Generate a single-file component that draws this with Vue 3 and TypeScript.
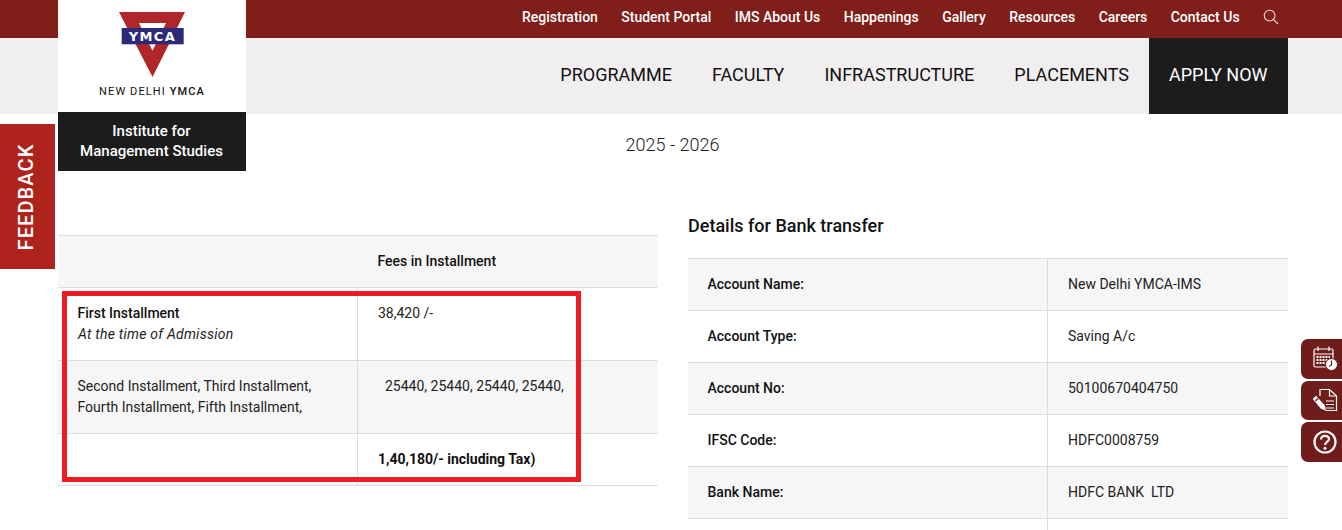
<script setup lang="ts">
const topLinks: string[] = ['Registration', 'Student Portal', 'IMS About Us', 'Happenings', 'Gallery', 'Resources', 'Careers', 'Contact Us']
const mainLinks: string[] = ['PROGRAMME', 'FACULTY', 'INFRASTRUCTURE', 'PLACEMENTS']
const bank: [string, string][] = [
  ['Account Name:', 'New Delhi YMCA-IMS'],
  ['Account Type:', 'Saving A/c'],
  ['Account No:', '50100670404750'],
  ['IFSC Code:', 'HDFC0008759'],
  ['Bank Name:', 'HDFC BANK  LTD'],
  ['', '']
]
</script>

<template>
  <div class="page">
    <header>
      <div class="top">
        <a v-for="l in topLinks" :key="l">{{ l }}</a>
        <svg class="search" width="16" height="16" viewBox="0 0 16 16" fill="none" stroke="#e9dcda" stroke-width="1.1">
          <circle cx="6.600" cy="6.600" r="5.400" />
          <path d="M10.600 10.600 15 15" />
        </svg>
      </div>
      <nav class="main">
        <a v-for="l in mainLinks" :key="l">{{ l }}</a>
        <a class="apply">APPLY NOW</a>
      </nav>
    </header>

    <div class="logo">
      <div class="logo-top">
        <svg class="mark" width="66" height="65" viewBox="0 0 66 65">
          <path d="M0 0H66L33.500 65Z" fill="#b0262a" />
          <path d="M20 11H47L33.500 38.700Z" fill="#fff" />
          <rect x="2.700" y="16" width="62" height="16.300" fill="#2c2a78" />
          <text x="33.500" y="29" text-anchor="middle" class="ymca">YMCA</text>
        </svg>
        <div class="logo-name">NEW DELHI <b>YMCA</b></div>
      </div>
      <div class="logo-bottom">Institute for<br />Management Studies</div>
    </div>

    <div class="feedback"><span>FEEDBACK</span></div>

    <div class="year">2025 - 2026</div>

    <main class="columns">
      <section class="left">
        <table class="fees">
          <tbody>
            <tr class="head">
              <td class="c1"></td>
              <td class="c2"><b>Fees in Installment</b></td>
            </tr>
            <tr class="r1">
              <td class="c1"><b>First Installment</b><br /><i>At the time of Admission</i></td>
              <td class="c2">38,420 /-</td>
            </tr>
            <tr class="r2 shade">
              <td class="c1">Second Installment, Third Installment,<br />Fourth Installment, Fifth Installment,</td>
              <td class="c2 indent">25440, 25440, 25440, 25440,</td>
            </tr>
            <tr class="r3">
              <td class="c1"></td>
              <td class="c2"><b class="total">1,40,180/- including Tax)</b></td>
            </tr>
          </tbody>
        </table>
      </section>
      <section class="right">
        <h3>Details for Bank transfer</h3>
        <table class="bank">
          <tbody>
            <tr v-for="(r, i) in bank" :key="i">
              <td class="b1"><b>{{ r[0] }}</b></td>
              <td class="b2">{{ r[1] }}</td>
            </tr>
          </tbody>
        </table>
      </section>
    </main>

    <div class="highlight"></div>

    <div class="side">
      <a class="side-btn">
        <svg width="25" height="25" viewBox="0 0 25 25" fill="none" stroke="#fff" stroke-width="1.200">
          <rect x="1" y="3" width="19" height="18" rx="1.500" />
          <path d="M1 8H20M5 .5V5M16 .5V5" />
          <path d="M3.500 11H17M3.500 14H17M3.500 17H13" stroke-width="2.200" stroke-dasharray="2 1" />
          <circle cx="18.500" cy="18.500" r="6" fill="#fff" stroke="#6f1d1a" stroke-width="1" />
          <path d="M18.500 14.500V19L16 20.500" stroke="#6f1d1a" />
        </svg>
      </a>
      <a class="side-btn">
        <svg width="25" height="25" viewBox="0 0 25 25" fill="none" stroke="#fff" stroke-width="1.200">
          <path d="M7 8V1.500H16.500L23.500 8V22.500H12" />
          <path d="M16.500 1.500V8H23.500" />
          <path d="M13 13H21M13 16.500H21M13 20H21" />
          <path d="M.5 11L3 8.500L11.500 18L12 21.500L8.500 20.500Z" fill="#fff" />
          <path d="M2.500 13 5 10.500" stroke="#6f1d1a" />
        </svg>
      </a>
      <a class="side-btn">
        <svg width="24" height="24" viewBox="0 0 24 24" fill="none" stroke="#fff" stroke-width="2.200">
          <circle cx="12" cy="12" r="10.500" />
          <path d="M8 9.500C8 6.900 10 5.800 12 5.800C14.400 5.800 16 7.100 16 9.200C16 11.900 12 12.100 12 15" />
          <circle cx="12" cy="18.200" r="1.500" fill="#fff" stroke="none" />
        </svg>
      </a>
    </div>
  </div>
</template>

<style scoped>
.page {
  position: relative;
  width: 1342px;
  height: 530px;
  overflow: hidden;
  background: #fff;
  font-family: Roboto, "Liberation Sans", sans-serif;
  color: #222;
}
.top {
  height: 38px;
  background: #801e1a;
  display: flex;
  align-items: center;
  justify-content: flex-end;
  padding-right: 63px;
  gap: 23.4px;
}
.top a {
  color: #fff;
  font-size: 14px;
  font-weight: 500;
  margin-top: -4px;
}
.search { margin-top: -4px; }
.main {
  height: 76px;
  background: #f1eeef;
  display: flex;
  justify-content: flex-end;
  padding-right: 54px;
}
.main a {
  display: flex;
  align-items: center;
  padding: 0 20.5px 4px 19.5px;
  font-size: 18px;
  color: #111;
}
.main a.apply {
  background: #1c1c1c;
  color: #fff;
}
.logo {
  position: absolute;
  left: 58px;
  top: 0;
  width: 188px;
}
.logo-top {
  height: 112px;
  background: #fff;
  display: flex;
  flex-direction: column;
  align-items: center;
  padding-top: 12px;
  box-sizing: border-box;
}
.mark { margin-left: -1px; }
.ymca {
  font-family: "DejaVu Sans", sans-serif;
  font-size: 13px;
  font-weight: 700;
  letter-spacing: 1.400px;
  fill: #fff;
}
.logo-name {
  margin-top: 8px;
  font-size: 11px;
  letter-spacing: 1.100px;
  color: #111;
}
.logo-bottom {
  height: 59px;
  background: #1c1c1c;
  color: #fff;
  font-size: 15px;
  font-weight: 500;
  line-height: 20px;
  text-align: center;
  padding: 9px 1px 0 0;
  box-sizing: border-box;
}
.feedback {
  position: absolute;
  left: 0;
  top: 124px;
  width: 55px;
  height: 145px;
  background: #ae231c;
  display: flex;
  align-items: center;
  justify-content: center;
  padding-right: 3px;
  box-sizing: border-box;
}
.feedback span {
  transform: rotate(-90deg);
  color: #fff;
  font-size: 20px;
  font-weight: 500;
  letter-spacing: 1.100px;
  white-space: nowrap;
}
.year {
  text-align: center;
  font-size: 18px;
  font-weight: 300;
  line-height: 24px;
  margin-top: 19px;
  padding-left: 3px;
  color: #222;
}
.columns {
  display: grid;
  grid-template-columns: 600px 600px;
  gap: 30px;
  padding-left: 58px;
}
.left { padding-top: 78px; }
table {
  border-collapse: collapse;
  width: 600px;
  table-layout: fixed;
  font-size: 14px;
  line-height: 21px;
}
td {
  vertical-align: top;
  padding: 0;
  box-sizing: border-box;
}
.fees tr { border-top: 1px solid #ddd; border-bottom: 1px solid #ddd; }
.fees .c1 { width: 299px; padding: 15px 19.5px 0; border-right: 1px solid #ddd; }
.fees .c2 { padding: 15px 20px 0 20.5px; }
.fees .indent { padding-left: 27.5px; }
.fees .head { height: 52px; background: #f6f6f6; }
.fees .head td { padding-top: 15px; border-right: 0; }
.fees .head .c2 { padding-left: 20.5px; }
.fees .r1 { height: 73px; }
.fees .r2 { height: 73px; }
.fees .r3 { height: 52px; }
.shade { background: #f6f6f6; }
b { font-weight: 500; color: #111; }
b.total { font-weight: 700; }
i { font-weight: 400; letter-spacing: .24px; padding-left: .5px; }
.right h3 {
  margin: 0;
  padding-top: 58px;
  font-size: 18px;
  font-weight: 500;
  line-height: 21px;
  color: #111;
}
.bank { margin-top: 22px; }
.bank tr { height: 52px; border-top: 1px solid #ddd; border-bottom: 1px solid #ddd; }
.bank tr:nth-child(odd) { background: #f6f6f6; }
.bank td { padding: 15px 20px 0 20.5px; white-space: pre; }
.bank .b1 { width: 359px; padding-left: 19.5px; border-right: 1px solid #ddd; }
.highlight {
  position: absolute;
  left: 62px;
  top: 291px;
  width: 519px;
  height: 191px;
  border: 5px solid #ed1c24;
  box-sizing: border-box;
}
.side {
  position: absolute;
  right: 0;
  top: 339px;
  width: 41px;
  display: flex;
  flex-direction: column;
  gap: 2px;
}
.side-btn {
  height: 39.500px;
  background: #6f1d1a;
  border-radius: 7px 0 0 7px;
  display: flex;
  align-items: center;
  padding-left: 12px;
  box-sizing: border-box;
}
</style>

<style>
html, body { margin: 0; overflow: hidden; }
</style>
